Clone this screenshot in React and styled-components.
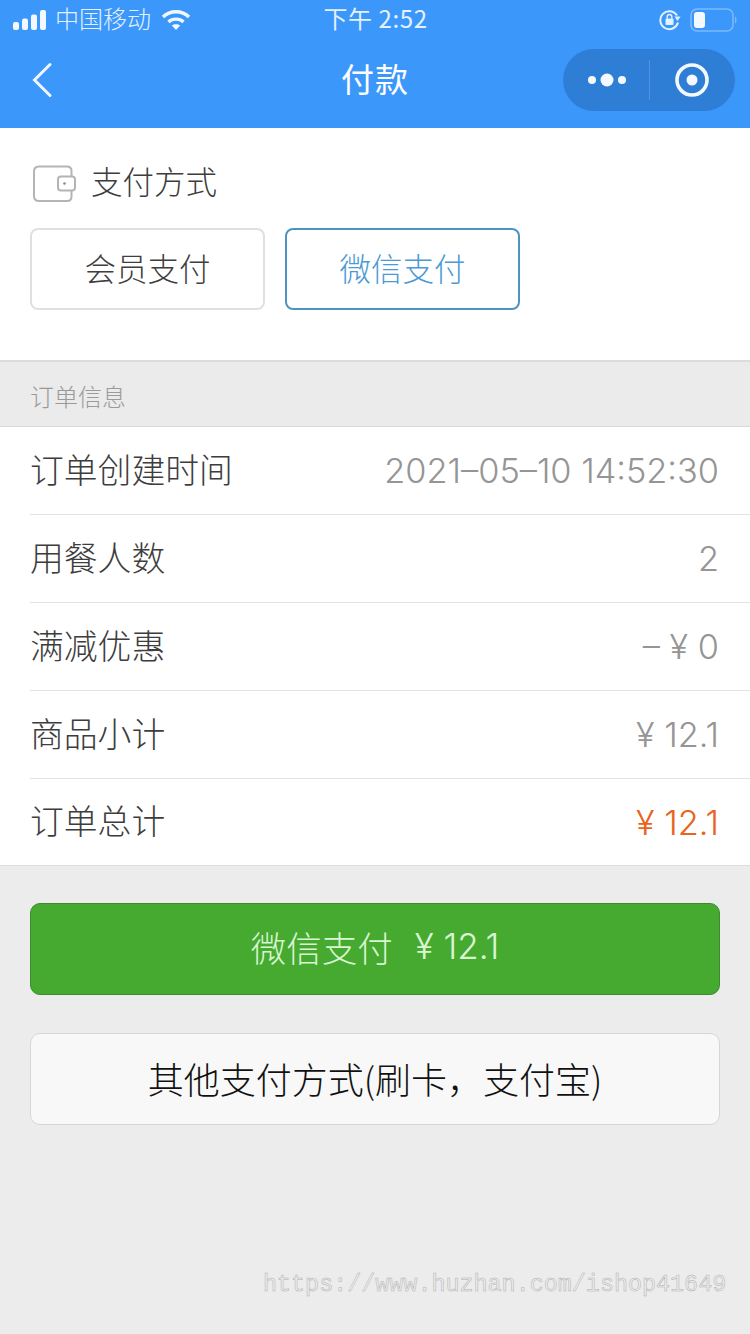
import React from "react";
import styled, { createGlobalStyle } from "styled-components";

const CJK = `"Noto Sans CJK SC", "Noto Sans", sans-serif`;
const LATIN = `Inter, "Noto Sans CJK SC", sans-serif`;

const GlobalStyle = createGlobalStyle`
  html, body {
    margin: 0;
    padding: 0;
    background: #ececec;
  }
  * {
    box-sizing: border-box;
  }
`;

const Page = styled.div`
  position: relative;
  width: 750px;
  height: 1334px;
  overflow: hidden;
  background: #ececec;
  font-family: ${CJK};
`;

const Header = styled.header`
  height: 128px;
  background: #3c97fb;
  color: #fff;
  display: flex;
  flex-direction: column;
`;

const StatusBar = styled.div`
  height: 40px;
  padding: 0 12px 0 13px;
  display: grid;
  grid-template-columns: 1fr auto 1fr;
  align-items: center;
  color: #e4f1ff;
`;

const StatusLeft = styled.div`
  display: flex;
  align-items: center;
  gap: 8px;
  font-size: 24px;
  font-weight: 300;
`;

const Carrier = styled.span`
  margin-right: 2px;
  padding-bottom: 4px;
  line-height: 32px;
`;

const Clock = styled.div`
  font-size: 24px;
  font-weight: 400;
  letter-spacing: 0.6px;
  padding-bottom: 4px;
  line-height: 32px;
`;

const StatusRight = styled.div`
  display: flex;
  justify-content: flex-end;
  align-items: center;
  gap: 9px;
`;

const NavBar = styled.div`
  flex: 1;
  display: grid;
  grid-template-columns: 1fr auto 1fr;
  align-items: center;
  padding: 0 15px 8px;
`;

const BackButton = styled.div`
  display: flex;
  align-items: center;
  margin-left: 15px;
`;

const NavTitle = styled.div`
  font-size: 33px;
  font-weight: 400;
  letter-spacing: 1px;
  padding-bottom: 4px;
  line-height: 44px;
`;

const Capsule = styled.div`
  justify-self: end;
  width: 172px;
  height: 62px;
  border-radius: 31px;
  background: #2f7ed6;
  display: grid;
  grid-template-columns: 86px 1px 85px;
  align-items: center;
  justify-items: center;
`;

const CapsuleDivider = styled.div`
  width: 1px;
  height: 40px;
  background: #4f94e2;
`;

const PaySection = styled.section`
  height: 234px;
  background: #fff;
  padding: 36px 30px 0;
  border-bottom: 2px solid #dcdcdc;
`;

const PayTitle = styled.div`
  display: flex;
  align-items: center;
  gap: 15px;
  padding-left: 3px;
  height: 40px;
  font-size: 31.5px;
  font-weight: 300;
  color: #3d3d3d;
`;

const PayTitleText = styled.span`
  padding-bottom: 8px;
  line-height: 44px;
`;

const MethodRow = styled.div`
  display: flex;
  gap: 20px;
  margin-top: 24px;
`;

const Method = styled.div`
  width: 235px;
  height: 82px;
  padding-bottom: 5px;
  display: flex;
  align-items: center;
  justify-content: center;
  border-radius: 8px;
  border: 2px solid ${(p) => (p.$active ? "#4d94c4" : "#e0e0e0")};
  color: ${(p) => (p.$active ? "#4a9ad4" : "#3f3f3f")};
  font-size: 31.5px;
  font-weight: 300;
`;

const SectionLabel = styled.div`
  height: 65px;
  padding: 3px 30px 0;
  display: flex;
  align-items: center;
  background: #ebebeb;
  border-bottom: 1px solid #d9d9d9;
  color: #9a9a9a;
  font-size: 24px;
  font-weight: 300;
`;

const InfoList = styled.div`
  background: #fff;
  border-bottom: 1px solid #dcdcdc;
`;

const Row = styled.div`
  height: 88px;
  margin-left: 30px;
  padding-right: 31px;
  display: flex;
  align-items: center;
  justify-content: space-between;
  border-bottom: 1px solid #e3e3e3;

  &:last-child {
    height: 86px;
    border-bottom: none;
  }
`;

const RowLabel = styled.span`
  font-size: 33.8px;
  font-weight: 300;
  color: #3d3d3d;
  padding-bottom: 5px;
`;

const RowValue = styled.span`
  font-family: ${LATIN};
  font-size: 34.3px;
  font-weight: 300;
  color: ${(p) => (p.$accent ? "#e8641c" : "#959595")};
`;

const Actions = styled.div`
  padding: 37px 30px 0;
  display: flex;
  flex-direction: column;
  gap: 38px;
`;

const ActionButton = styled.div`
  height: 92px;
  padding-bottom: ${(p) => (p.$primary ? "6px" : "2px")};
  border-radius: 10px;
  display: flex;
  align-items: center;
  justify-content: center;
  font-size: ${(p) => (p.$primary ? "35.5px" : "36px")};
  font-weight: 300;
  background: ${(p) => (p.$primary ? "#46aa30" : "#f8f8f8")};
  color: ${(p) => (p.$primary ? "#d9f5d2" : "#111")};
  border: 1px solid ${(p) => (p.$primary ? "#3f8a2e" : "#d6d6d6")};
`;

const Amount = styled.span`
  font-family: ${LATIN};
  font-size: 35px;
  font-weight: 300;
  margin-left: 22px;
`;

const Watermark = styled.div`
  position: absolute;
  left: 263px;
  top: 1270px;
  font-family: "Liberation Mono", monospace;
  font-size: 23.4px;
  line-height: 30px;
  color: transparent;
  -webkit-text-stroke: 0.5px #b0b0b0;
  white-space: nowrap;
`;

const Signal = () => (
  <svg width="34" height="20" viewBox="0 0 34 20" fill="#f2f8ff">
    <rect x="0" y="12" width="6" height="8" rx="2" />
    <rect x="9" y="8.5" width="6" height="11.5" rx="2" />
    <rect x="18" y="4.5" width="6" height="15.5" rx="2" />
    <rect x="27" y="0" width="6" height="20" rx="2" />
  </svg>
);

const Wifi = () => (
  <svg width="30" height="22" viewBox="0 0 30 22" fill="none" stroke="#f2f8ff" strokeWidth="3.4">
    <path d="M2 8 C9 1 21 1 28 8" />
    <path d="M7.5 13 C11.5 9.2 18.5 9.2 22.5 13" />
    <path d="M15 21 L10.8 16.6 C13 14.9 17 14.9 19.2 16.6 Z" fill="#f2f8ff" stroke="none" />
  </svg>
);

const RotationLock = () => (
  <svg width="22" height="22" viewBox="0 0 22 22" fill="none">
    <path d="M18 6.5 A9 9 0 1 0 19 13.5" stroke="#e4f1ff" strokeWidth="2" />
    <path d="M15.5 7.5 L21.5 7.5 L18.5 12 Z" fill="#e4f1ff" />
    <rect x="6.5" y="9.5" width="8" height="6.5" rx="1" fill="#e4f1ff" />
    <path d="M8.2 9.5 V7.8 A2.3 2.3 0 0 1 12.8 7.8 V9.5" stroke="#e4f1ff" strokeWidth="1.4" />
  </svg>
);

const Battery = () => (
  <svg width="48" height="24" viewBox="0 0 48 24" fill="none">
    <rect x="1" y="1" width="42" height="22" rx="6" stroke="#7cb9fb" strokeWidth="1.6" />
    <rect x="4" y="4" width="11" height="16" rx="3" fill="#f4f9ff" />
    <path d="M45 8.5 C47 9.5 47 14.5 45 15.5 Z" fill="#7cb9fb" />
  </svg>
);

const Back = () => (
  <svg width="24" height="36" viewBox="0 0 24 36" fill="none" stroke="#eef6ff" strokeWidth="3" strokeLinecap="round">
    <path d="M20 2.5 L4.5 18 L20 33.5" />
  </svg>
);

const Dots = () => (
  <svg width="42" height="16" viewBox="0 0 42 16" fill="#f4f9ff">
    <circle cx="7" cy="8" r="4" />
    <circle cx="22" cy="8" r="6.5" />
    <circle cx="37" cy="8" r="4" />
  </svg>
);

const Target = () => (
  <svg width="36" height="36" viewBox="1 0 36 36" fill="none">
    <circle cx="18" cy="18" r="15" stroke="#f4f9ff" strokeWidth="3.6" />
    <circle cx="18" cy="18" r="5.5" fill="#f4f9ff" />
  </svg>
);

const Wallet = () => (
  <svg width="43" height="38" viewBox="0 0 43 38" fill="none" stroke="#b4b4b4" strokeWidth="2">
    <path d="M38.5 11.5 V6 Q38.5 1.5 34 1.5 H6 Q1 1.5 1 6.5 V31 Q1 36 6 36 H34 Q38.5 36 38.5 31.5 V25.5" />
    <rect x="25" y="11.5" width="17" height="14" rx="3" />
    <circle cx="31.5" cy="18.5" r="1.3" fill="#8c8c8c" stroke="none" />
  </svg>
);

const ROWS = [
  { label: "订单创建时间", value: "2021–05–10 14:52:30" },
  { label: "用餐人数", value: "2" },
  { label: "满减优惠", value: "– ¥ 0" },
  { label: "商品小计", value: "¥ 12.1" },
  { label: "订单总计", value: "¥ 12.1", accent: true },
];

export default function App() {
  return (
    <Page>
      <GlobalStyle />
      <Header>
        <StatusBar>
          <StatusLeft>
            <Signal />
            <Carrier>中国移动</Carrier>
            <Wifi />
          </StatusLeft>
          <Clock>下午 2:52</Clock>
          <StatusRight>
            <RotationLock />
            <Battery />
          </StatusRight>
        </StatusBar>
        <NavBar>
          <BackButton>
            <Back />
          </BackButton>
          <NavTitle>付款</NavTitle>
          <Capsule>
            <Dots />
            <CapsuleDivider />
            <Target />
          </Capsule>
        </NavBar>
      </Header>

      <PaySection>
        <PayTitle>
          <Wallet />
          <PayTitleText>支付方式</PayTitleText>
        </PayTitle>
        <MethodRow>
          <Method>会员支付</Method>
          <Method $active>微信支付</Method>
        </MethodRow>
      </PaySection>

      <SectionLabel>订单信息</SectionLabel>

      <InfoList>
        {ROWS.map((row) => (
          <Row key={row.label}>
            <RowLabel>{row.label}</RowLabel>
            <RowValue $accent={row.accent}>{row.value}</RowValue>
          </Row>
        ))}
      </InfoList>

      <Actions>
        <ActionButton $primary>
          微信支付
          <Amount>¥ 12.1</Amount>
        </ActionButton>
        <ActionButton>其他支付方式(刷卡，支付宝)</ActionButton>
      </Actions>

      <Watermark>https://www.huzhan.com/ishop41649</Watermark>
    </Page>
  );
}
